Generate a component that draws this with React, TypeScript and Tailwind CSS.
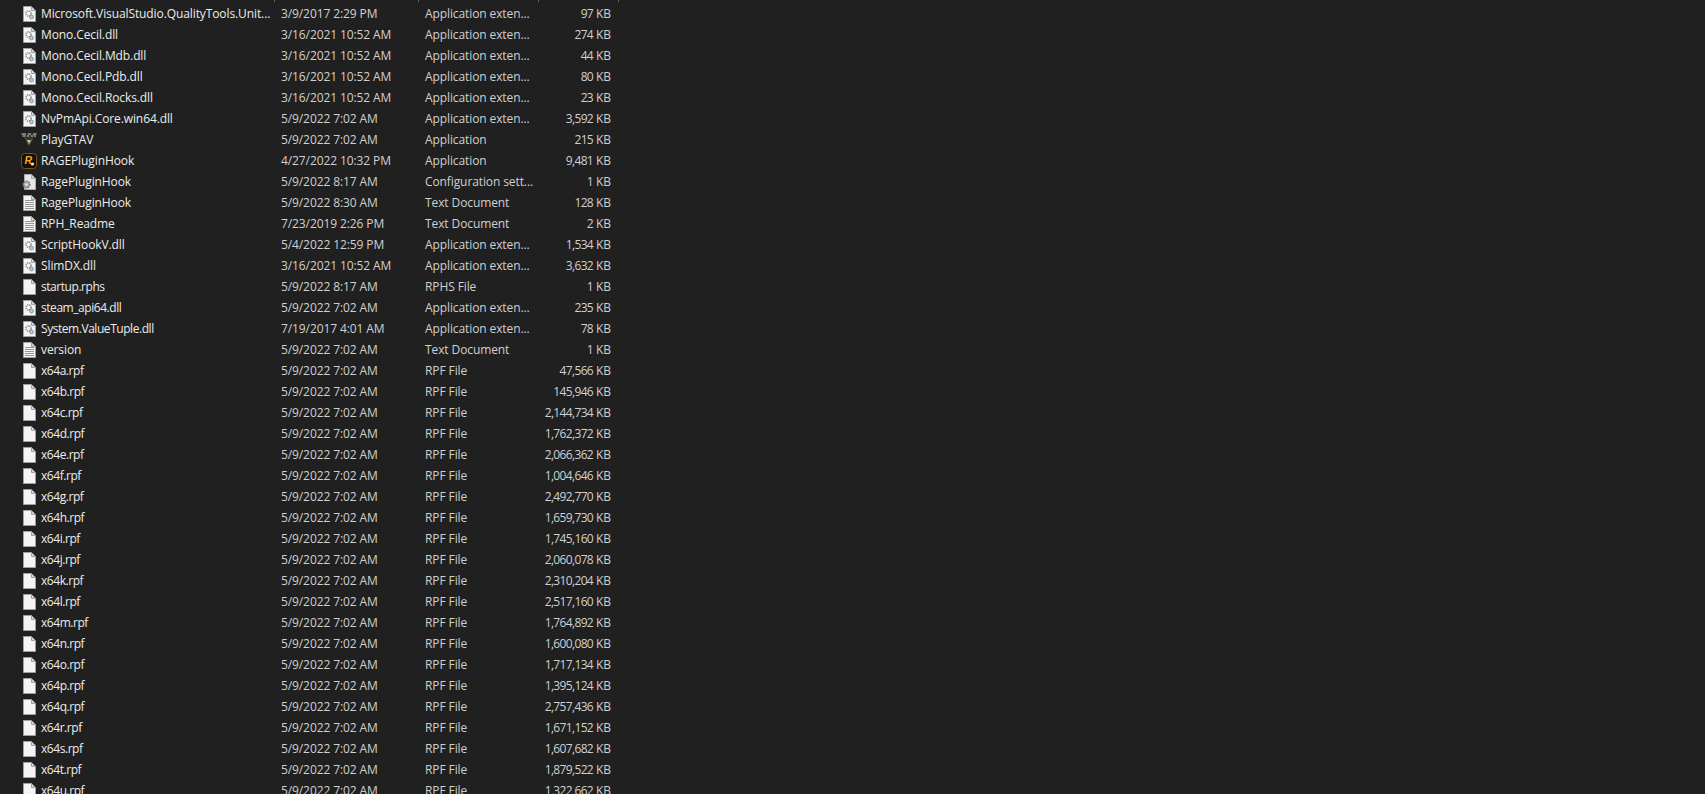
import React from 'react';

type IconKind = 'dll' | 'text' | 'blank' | 'config' | 'gta' | 'rage';

interface FileRow {
  name: string;
  date: string;
  type: string;
  size: string;
  icon: IconKind;
}

const APP_EXT = 'Application exten...';
const STAMP = '5/9/2022 7:02 AM';

const topRows: FileRow[] = [
  { name: 'Microsoft.VisualStudio.QualityTools.Unit...', date: '3/9/2017 2:29 PM', type: APP_EXT, size: '97', icon: 'dll' },
  { name: 'Mono.Cecil.dll', date: '3/16/2021 10:52 AM', type: APP_EXT, size: '274', icon: 'dll' },
  { name: 'Mono.Cecil.Mdb.dll', date: '3/16/2021 10:52 AM', type: APP_EXT, size: '44', icon: 'dll' },
  { name: 'Mono.Cecil.Pdb.dll', date: '3/16/2021 10:52 AM', type: APP_EXT, size: '80', icon: 'dll' },
  { name: 'Mono.Cecil.Rocks.dll', date: '3/16/2021 10:52 AM', type: APP_EXT, size: '23', icon: 'dll' },
  { name: 'NvPmApi.Core.win64.dll', date: STAMP, type: APP_EXT, size: '3,592', icon: 'dll' },
  { name: 'PlayGTAV', date: STAMP, type: 'Application', size: '215', icon: 'gta' },
  { name: 'RAGEPluginHook', date: '4/27/2022 10:32 PM', type: 'Application', size: '9,481', icon: 'rage' },
  { name: 'RagePluginHook', date: '5/9/2022 8:17 AM', type: 'Configuration sett...', size: '1', icon: 'config' },
  { name: 'RagePluginHook', date: '5/9/2022 8:30 AM', type: 'Text Document', size: '128', icon: 'text' },
  { name: 'RPH_Readme', date: '7/23/2019 2:26 PM', type: 'Text Document', size: '2', icon: 'text' },
  { name: 'ScriptHookV.dll', date: '5/4/2022 12:59 PM', type: APP_EXT, size: '1,534', icon: 'dll' },
  { name: 'SlimDX.dll', date: '3/16/2021 10:52 AM', type: APP_EXT, size: '3,632', icon: 'dll' },
  { name: 'startup.rphs', date: '5/9/2022 8:17 AM', type: 'RPHS File', size: '1', icon: 'blank' },
  { name: 'steam_api64.dll', date: STAMP, type: APP_EXT, size: '235', icon: 'dll' },
  { name: 'System.ValueTuple.dll', date: '7/19/2017 4:01 AM', type: APP_EXT, size: '78', icon: 'dll' },
  { name: 'version', date: STAMP, type: 'Text Document', size: '1', icon: 'text' },
];

const rpfSizes: [string, string][] = [
  ['a', '47,566'], ['b', '145,946'], ['c', '2,144,734'], ['d', '1,762,372'], ['e', '2,066,362'],
  ['f', '1,004,646'], ['g', '2,492,770'], ['h', '1,659,730'], ['i', '1,745,160'], ['j', '2,060,078'],
  ['k', '2,310,204'], ['l', '2,517,160'], ['m', '1,764,892'], ['n', '1,600,080'], ['o', '1,717,134'],
  ['p', '1,395,124'], ['q', '2,757,436'], ['r', '1,671,152'], ['s', '1,607,682'], ['t', '1,879,522'],
  ['u', '1,322,662'],
];

const rows: FileRow[] = [
  ...topRows,
  ...rpfSizes.map(([letter, size]): FileRow => ({
    name: `x64${letter}.rpf`,
    date: STAMP,
    type: 'RPF File',
    size,
    icon: 'blank',
  })),
];

const Sheet = ({ children }: { children?: React.ReactNode }) => (
  <svg width="16" height="16" viewBox="0 0 16 16" className="shrink-0">
    <path d="M2.5 0.5H10.5L14.5 4.5V15.5H2.5Z" fill="#f4f4f4" stroke="#a0a0a0" />
    <path d="M10.5 0.5V4.5H14.5Z" fill="#d4d4d4" stroke="#a0a0a0" />
    {children}
  </svg>
);

const TextLines = () => (
  <Sheet>
    <path d="M4 5.5H13M4 7.5H13M4 9.5H13M4 11.5H13M4 13.5H13" stroke="#969696" />
  </Sheet>
);

const DllIcon = () => (
  <Sheet>
    <circle cx="7.5" cy="7.5" r="2.6" fill="none" stroke="#969696" strokeWidth="1.6" strokeDasharray="1.4 0.7" />
    <circle cx="10.5" cy="11" r="1.9" fill="#b4cde2" stroke="#7d98ae" />
  </Sheet>
);

const ConfigIcon = () => (
  <svg width="16" height="16" viewBox="0 0 16 16" className="shrink-0">
    <path d="M3.5 0.5H10.5L14.5 4.5V15.5H3.5Z" fill="#e6e6e6" stroke="#aaaaaa" />
    <path d="M10.5 0.5V4.5H14.5Z" fill="#cfcfcf" stroke="#aaaaaa" />
    <circle cx="5.5" cy="10.5" r="3.2" fill="#b5b5b5" stroke="#777777" strokeWidth="1.8" strokeDasharray="1.5 0.9" />
    <circle cx="5.5" cy="10.5" r="1.1" fill="#efefef" />
  </svg>
);

const GtaIcon = () => (
  <svg width="16" height="16" viewBox="0 0 16 16" className="shrink-0">
    <path d="M0.5 1.5H15.5L13.5 5L8.5 14H7.5L2.5 5Z" fill="#34342f" />
    <path d="M0.5 2H5M7 2H10M12 2H15.5M1.5 4H4.5M6 4H8M10 4H12M13 4H15" stroke="#cfcfc8" />
    <path d="M4.5 6L8 13L11.5 6L10 8H6Z" fill="#7f9c78" />
    <path d="M7 8H9V10H7Z" fill="#c4cdbe" />
  </svg>
);

const RageIcon = () => (
  <svg width="16" height="16" viewBox="0 0 16 16" className="shrink-0">
    <rect x="0.5" y="0.5" width="15" height="15" rx="3" fill="#15100a" stroke="#7d5313" />
    <text x="3.5" y="11" fontSize="10.5" fontWeight="700" fontStyle="italic" fill="#f5a81c" fontFamily="Liberation Sans, sans-serif">R</text>
    <circle cx="11.5" cy="11" r="1.6" fill="#f7e3b0" />
  </svg>
);

const FileIcon = ({ kind }: { kind: IconKind }) => {
  if (kind === 'dll') return <DllIcon />;
  if (kind === 'text') return <TextLines />;
  if (kind === 'config') return <ConfigIcon />;
  if (kind === 'gta') return <GtaIcon />;
  if (kind === 'rage') return <RageIcon />;
  return <Sheet />;
};

export default function App() {
  return (
    <div className="h-screen overflow-hidden bg-[#202020] text-[12px] text-[#dedede] font-['Open_Sans','Noto_Sans',sans-serif] tracking-[-0.1px]">
      {/* column header dividers, only the bottom of them is visible */}
      <div className="grid grid-cols-[275px_144px_120px_80px] h-[3px] w-[619px]">
        <div className="h-[2px] border-r border-[#636363]" />
        <div className="h-[2px] border-r border-[#636363]" />
        <div className="h-[2px] border-r border-[#636363]" />
        <div className="h-[2px] border-r border-[#636363]" />
      </div>

      {rows.map((row, i) => {
        // these names come out wider in Open Sans than in the reference
        const tight = /^(x64|startup|steam|System)/.test(row.name);
        return (
          <div key={i} className="grid grid-cols-[275px_144px_120px_80px] h-[21px] w-[619px] items-center leading-[21px] whitespace-nowrap">
            <div className="flex items-center pl-[21px] gap-[4px] text-[#ececec]">
              <FileIcon kind={row.icon} />
              <span className={tight ? 'tracking-[-0.45px]' : ''}>{row.name}</span>
            </div>
            <div className="pl-[6px] text-[#d0d0d0]">{row.date}</div>
            <div className="pl-[6px] text-[#d0d0d0]">{row.type}</div>
            <div className="pr-[8px] text-right text-[#d0d0d0]">
              <span className="tracking-[-0.65px]">{row.size}</span> KB
            </div>
          </div>
        );
      })}
    </div>
  );
}
